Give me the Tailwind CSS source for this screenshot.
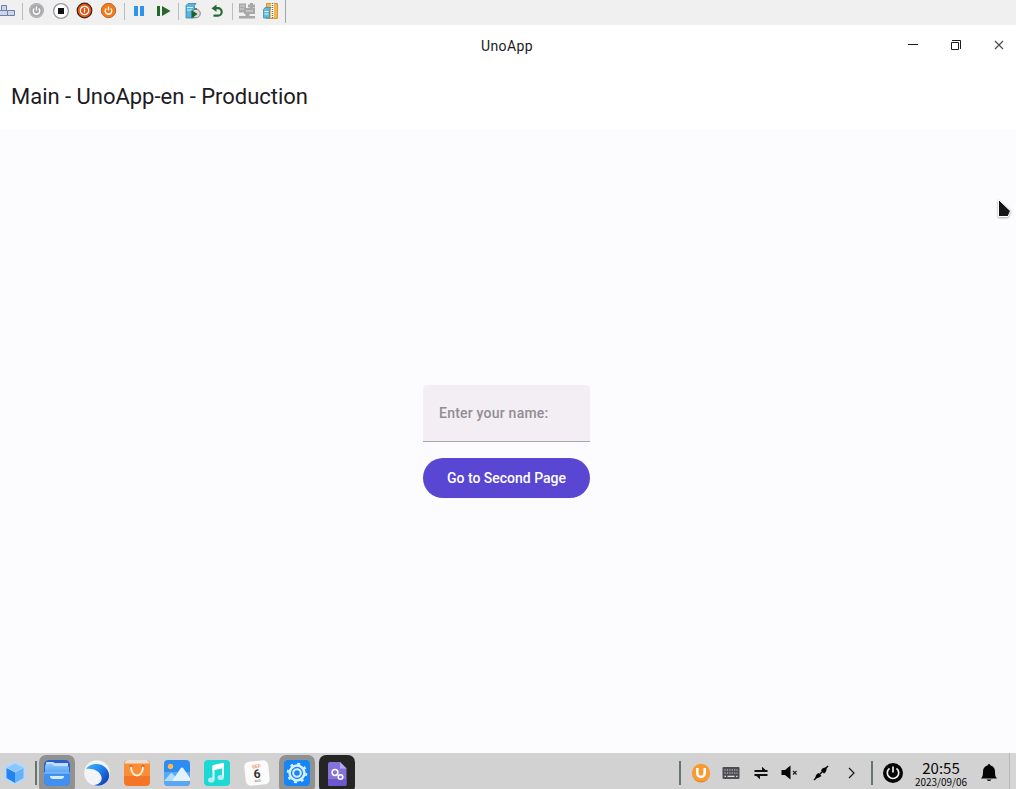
<!DOCTYPE html>
<html lang="en">
<head>
<meta charset="utf-8">
<title>UnoApp</title>
<script src="https://cdn.jsdelivr.net/npm/@tailwindcss/browser@4"></script>
</head>
<body class="w-[1016px] h-[789px] overflow-hidden relative flex flex-col bg-[#fcfcfe] font-['Roboto',sans-serif] text-[#1c1b1f]">

<!-- Virtual machine toolbar -->
<div class="h-[25px] shrink-0 flex items-start bg-[#f0f0f0]">
  <svg class="w-4 h-[22px]" viewBox="0 0 16 22"><g fill="#cbd5ee" stroke="#7180a0" stroke-width="1"><path d="M1.500 5.500h5v5h-5z"/><path d="M-1 10.500h8.500v5H-1z"/><path d="M7.500 10.500h7v5h-7z"/></g></svg>
  <div class="ml-1.5 mt-[3px] w-px h-[17px] bg-[#bcbcbc]"></div>
  <svg class="ml-px w-6 h-[22px]" viewBox="0 0 24 22"><circle cx="12.500" cy="10.500" r="7.500" fill="#aaa8ad"/><circle cx="12.500" cy="10.500" r="6.500" fill="none" stroke="#bbb"/><path d="M10.300 8.500a3.300 3.300 0 1 0 4.400 0M12.500 6.500v4" fill="none" stroke="#fff" stroke-width="1.300"/></svg>
  <svg class="w-6 h-[22px]" viewBox="0 0 24 22"><circle cx="13" cy="11" r="7.400" fill="#fff" stroke="#9997a0" stroke-width="1.300"/><path d="M10 8h6v6h-6z" fill="#111"/></svg>
  <svg class="w-6 h-[22px]" viewBox="0 0 24 22"><circle cx="12.500" cy="10.500" r="7.300" fill="#e85716" stroke="#3e2418" stroke-width="1.200"/><circle cx="12.500" cy="10.500" r="4.200" fill="none" stroke="#fff" stroke-width="1.200"/><path d="M12.500 8v4.500" stroke="#fff" stroke-width="1.200"/></svg>
  <svg class="w-6 h-[22px]" viewBox="0 0 24 22"><circle cx="12.500" cy="10.500" r="7.200" fill="#f27b17" stroke="#b76832"/><path d="M10.300 8.500a3.300 3.300 0 1 0 4.400 0M12.500 6.500v4" fill="none" stroke="#fff" stroke-width="1.300"/></svg>
  <div class="ml-1 mt-[3px] w-px h-[17px] bg-[#bcbcbc]"></div>
  <svg class="ml-0.5 w-6 h-[22px]" viewBox="0 0 24 22"><path d="M7 6h4v10H7zM13 6h4v10h-4z" fill="#2f94ec"/></svg>
  <svg class="w-6 h-[22px]" viewBox="0 0 24 22"><path d="M6 6h3v10H6zM11 6l8.500 5L11 16z" fill="#25692b"/></svg>
  <div class="ml-[3px] mt-[3px] w-px h-[17px] bg-[#bcbcbc]"></div>
  <svg class="ml-0.5 w-6 h-[22px]" viewBox="0 0 24 22"><path d="M5 5.500L7 3.500h8l-1.500 2V18H5z" fill="#58b5df" stroke="#3e839f" stroke-width=".8"/><path d="M6 7.500h6M6 10h5" stroke="#d4f2ff"/><circle cx="15" cy="13.500" r="4.300" fill="#ddd" stroke="#858585"/><path d="M13 8h3v2h-3z" fill="#777"/><path d="M10.500 10l6 4-6 4.500z" fill="#19632c"/></svg>
  <svg class="w-6 h-[22px]" viewBox="0 0 24 22"><path d="M10 8.200h3a3.700 3.700 0 0 1 0 7.400H8.500" fill="none" stroke="#286b31" stroke-width="2.200"/><path d="M6.500 8.200l5-3.800v7.600z" fill="#286b31"/></svg>
  <div class="ml-[3px] mt-[3px] w-px h-[17px] bg-[#bcbcbc]"></div>
  <svg class="ml-0.5 w-6 h-[22px]" viewBox="0 0 24 22"><g fill="#a8a8a8"><path d="M4 3.500h7v9H4zM9 8h11v6H9zM4 16h16v2.500H4zM10.500 13h4v4h-4z"/><path d="M15 3h3v6h-3z"/><path d="M13 4.500h7v3h-7z"/></g><path d="M5 6h5M5 9h4" stroke="#d5d5d5"/><path d="M11 10h7v2h-7z" fill="#c5c5c5"/></svg>
  <svg class="w-6 h-[22px]" viewBox="0 0 24 22"><path d="M7.500 3.500h11v15h-11z" fill="#f4b751" stroke="#d99635"/><path d="M13.500 3v15" stroke="#fff" stroke-width="3"/><path d="M13.500 3v15" stroke="#7c6b52" stroke-width="1.600" stroke-dasharray="1 1"/><path d="M4.500 9.500l1.500-2h6l-1.500 2V18h-6z" fill="#60b9df" stroke="#398daf" stroke-width=".8"/><path d="M5.500 11.500h4M5.500 14h4" stroke="#dff6ff"/></svg>
  <div class="ml-0.5 w-px h-[23px] bg-[#a6a6a6]"></div>
</div>

<!-- Window title bar -->
<div class="h-10 shrink-0 bg-white grid grid-cols-[1fr_auto_1fr] items-center">
  <span></span>
  <span class="text-sm leading-5 tracking-[0.400px] pt-0.5 pr-[2px]">UnoApp</span>
  <div class="flex justify-end gap-[23px] pr-[7px]">
    <svg class="w-5 h-5" viewBox="0 0 20 20" fill="none" stroke="#1b1b1b"><path d="M5 9.500h10"/></svg>
    <svg class="w-5 h-5" viewBox="0 0 20 20" fill="none" stroke="#1b1b1b"><path d="M5.500 7.500h7v7h-7zM6 5.500h8.500V14"/></svg>
    <svg class="w-5 h-5" viewBox="0 0 20 20" fill="none" stroke="#4a4d50" stroke-width="1.200"><path d="M6 6l8 8M14 6l-8 8"/></svg>
  </div>
</div>

<!-- Navigation header -->
<header class="h-16 shrink-0 bg-white flex items-center pl-[11px]">
  <h1 class="text-[22px] leading-7 tracking-[-0.020px] whitespace-nowrap">Main - UnoApp-en - Production</h1>
</header>

<main class="grow flex flex-col items-center pt-64 pr-[3px]">
  <div class="w-[167px] h-[57px] rounded-t bg-[#f3eef4] border-b border-[#a9a6aa] flex items-center px-4 text-sm font-medium tracking-[0.220px] text-[#8f8d93] whitespace-nowrap">Enter your name:</div>
  <button class="mt-4 w-[167px] h-10 rounded-full bg-[#5946d2] text-white text-sm font-medium whitespace-nowrap">Go to Second Page</button>
</main>

<!-- Desktop taskbar -->
<footer class="h-9 shrink-0 bg-[#d2d2d2] flex items-start overflow-hidden">
  <svg class="w-[30px] h-9 mr-[5px]" viewBox="0 0 30 36"><path d="M15 8l10.500 5v13L15 32 4.500 26V13z" fill="#b4d9fb"/><path d="M15 10.500l8 4-8 4.500-8-4.500z" fill="#8cc6fb"/><path d="M6.500 15l8.500 4.500V30l-8.500-5z" fill="#2383ef"/><path d="M23.500 15L15 19.500V30l8.500-5z" fill="#65b1fa"/></svg>
  <div class="w-0.5 h-6 mt-2 mr-0.5 bg-[#66756b]"></div>
  <div class="flex gap-1">
    <div class="w-9 h-[38px] mt-0.5 rounded-[7px] bg-[#919191] flex justify-center"><svg class="w-[26px] h-[34px]" viewBox="0 2 26 34"><defs><linearGradient id="folder" x2="0" y2="1"><stop stop-color="#8cc5fb"/><stop offset="1" stop-color="#4c9df3"/></linearGradient></defs><rect y="7" width="26" height="26" rx="5" fill="#2360cf"/><path d="M2 10q0-1 1-1h6l2 1h13v3H2z" fill="#c3dcfa"/><path d="M1 13q0-2 2-2h4q2 0 3 2h13q2 0 2 2v7H1z" fill="url(#folder)"/><path d="M0 20h26v8a5 5 0 0 1-5 5H5a5 5 0 0 1-5-5z" fill="#3f90f2"/><path d="M0 20h26" stroke="#8bcaff"/><path d="M6 23h14q0 3-3 3H9q-3 0-3-3z" fill="#d5edff"/></svg></div>
    <svg class="w-9 h-9" viewBox="0 0 36 36"><defs><linearGradient id="wave" x2="1" y2=".7"><stop stop-color="#43b2f0"/><stop offset=".5" stop-color="#2288f2"/><stop offset="1" stop-color="#143fb5"/></linearGradient></defs><circle cx="18" cy="20" r="12.800" fill="#f2f4f7"/><path d="M7 16C11 10 21 9.500 26.500 14.500c6 5.500 4.500 14.500-3.500 17.500-3 1.200-6 .9-8.500 0 7-.5 9.500-5 7.500-9.500C20 18 14 15 7 16z" fill="url(#wave)"/></svg>
    <svg class="w-9 h-9" viewBox="0 0 36 36"><rect x="5" y="7" width="26" height="26" rx="4" fill="#f37525"/><path d="M8.500 7h19q2 0 3.500 4H5q1.500-4 3.500-4z" fill="#e9ded7"/><path d="M5 10.500h26V23H5z" fill="#fa8e37"/><circle cx="12" cy="13.500" r="1.300" fill="#9c4819"/><circle cx="24" cy="13.500" r="1.300" fill="#9c4819"/><path d="M12 13.500c0 12 12 12 12 0" fill="none" stroke="#fff3df" stroke-width="1.800"/></svg>
    <svg class="w-9 h-9" viewBox="0 0 36 36"><rect x="5" y="7" width="26" height="26" rx="4" fill="#2b8df2"/><path d="M5 19h26v9q0 5-5 5H10q-5 0-5-5z" fill="#55aaf8"/><path d="M5 28l6-7q1.500-2 3 0l6 7z" fill="#b4dafc"/><path d="M13 28l8.500-12.500q1.500-2 3 0L31 25v3z" fill="#e4f2ff"/><path d="M5 28h26q0 5-5 5H10q-5 0-5-5z" fill="#5ba7f2"/><circle cx="11.500" cy="13.500" r="2.700" fill="#ffb64a"/></svg>
    <svg class="w-9 h-9" viewBox="0 0 36 36"><rect x="5" y="7" width="26" height="26" rx="4" fill="#1ed8d3"/><path d="M14.500 13l9.500-2v13.500M14.500 13v14" fill="none" stroke="#e5fffe" stroke-width="2"/><path d="M13.500 12.500L25 10v5l-11.500 2.500z" fill="#fff"/><ellipse cx="12.200" cy="27" rx="3.200" ry="2.600" fill="#b5ecf5"/><ellipse cx="21.700" cy="24.500" rx="3.200" ry="2.600" fill="#b5ecf5"/></svg>
    <div class="w-9 h-9 pt-2 flex justify-center"><div class="w-6 h-6 rounded-[5px] bg-[#fbfbfb] -rotate-6 flex flex-col items-center text-center"><span class="text-[5px] leading-[6px] pt-[2px] font-bold text-[#e79d79]">SEP</span><span class="text-[12px] leading-[11px] font-bold text-[#303030]">6</span><span class="text-[3px] leading-[3px] text-[#555]">WED</span></div></div>
    <div class="w-9 h-[38px] mt-0.5 rounded-[7px] bg-[#919191] flex justify-center"><svg class="w-[26px] h-[34px]" viewBox="0 2 26 34"><rect y="7" width="26" height="26" rx="4" fill="#1586f7"/><circle cx="13" cy="20" r="9.300" fill="none" stroke="#d9efff" stroke-width="2" stroke-dasharray="3 4.300"/><circle cx="13" cy="20" r="7.400" fill="none" stroke="#d9efff" stroke-width="2.500"/><circle cx="13" cy="20" r="3.800" fill="none" stroke="#d9efff" stroke-width="2"/></svg></div>
    <div class="w-9 h-[38px] mt-0.5 rounded-[7px] bg-[#252525] flex justify-center"><svg class="w-[26px] h-[34px]" viewBox="0 2 26 34"><path d="M6 9h10l6.500 6.500V31q0 2-2 2H6q-2 0-2-2V11q0-2 2-2z" fill="#8673da"/><path d="M16 9l6.500 6.500H16z" fill="#b5a9ed"/><path d="M4 26h18.500v5q0 2-2 2H6q-2 0-2-2z" fill="#6f58cc"/><g fill="none" stroke="#fff" stroke-width="1.500"><circle cx="11" cy="19.500" r="2.900"/><circle cx="16.500" cy="24" r="2.300"/></g></svg></div>
  </div>

  <!-- System tray -->
  <div class="ml-auto flex items-start">
    <div class="w-0.5 h-6 mt-2 mr-[5px] bg-[#66756b]"></div>
    <svg class="w-[30px] h-9" viewBox="0 0 30 36"><circle cx="15" cy="20" r="9.200" fill="#f79a2f"/><path d="M8 26a9.200 9.200 0 0 0 14 0 11 11 0 0 1-14 0z" fill="#e96e21"/><path d="M11.300 15v5.300a3.700 3.700 0 0 0 7.400 0V15" fill="none" stroke="#fff" stroke-width="2.600"/></svg>
    <svg class="w-[30px] h-9" viewBox="0 0 30 36"><rect x="6.500" y="14" width="17" height="12" rx="1" fill="#4d4d53"/><path d="M8.500 17h13M8.500 20h13" stroke="#ddd" stroke-width="1.200" stroke-dasharray="1.200 1.200"/><path d="M8.500 23.300h1.500m1.500 0h7m1.500 0h1.500" stroke="#ddd" stroke-width="1.200"/></svg>
    <svg class="w-[30px] h-9" viewBox="0 0 30 36"><path d="M8.500 18h13M8.500 22h13" stroke="#111" stroke-width="1.800"/><path d="M16 13.700l5.500 5h-5.500zM14 26.300l-5.500-5H14z" fill="#111"/></svg>
    <svg class="w-[30px] h-9" viewBox="0 0 30 36"><path d="M5.500 17h3.500l5.500-4.500v14L9 22H5.500z" fill="#050505"/><path d="M17 18l3.500 3.500M20.500 18L17 21.500" stroke="#222" stroke-width="1.200"/></svg>
    <svg class="w-[30px] h-9" viewBox="0 0 30 36"><path d="M8 27l14-14" stroke="#050505" stroke-width="1.500"/><path d="M9.500 25.500q-.5-4 3-5.500l3 3q-3 2-6 2.500zM20.500 14.500q-4-.5-5.500 3l3 3q3-2 2.500-6z" fill="#050505"/></svg>
    <svg class="w-[30px] h-9" viewBox="0 0 30 36"><path d="M13 15l5 5-5 5" fill="none" stroke="#181818" stroke-width="1.200"/></svg>
    <div class="w-0.5 h-6 mt-2 ml-[5px] bg-[#66756b]"></div>
    <svg class="w-10 h-9" viewBox="0 0 40 36"><circle cx="20" cy="20" r="10" fill="#050505"/><path d="M16.500 15.300a5.700 5.700 0 1 0 7 0M20 13.500v6" fill="none" stroke="#eee" stroke-width="1.700"/></svg>
    <div class="w-[56px] flex flex-col items-center font-['Noto_Sans_CJK_SC','Noto_Sans',sans-serif] text-[#080808]"><span class="text-[15px] leading-[18px] mt-1.5">20:55</span><span class="text-[10px] leading-[10px]">2023/09/06</span></div>
    <svg class="w-10 h-9" viewBox="0 0 40 36"><path d="M20 11q1.500 0 1.500 1.500 4.500 1.300 4.500 6c0 4 .5 5.500 2 7H12c1.500-1.500 2-3 2-7q0-4.700 4.500-6Q18.500 11 20 11zM17.500 26.500h5q-2.500 3-5 0z" fill="#050505"/></svg>
    <div class="h-9 w-[7px] border-l border-[#b9b9b9] bg-[#d6d6d6]"></div>
  </div>
</footer>

<!-- Mouse pointer -->
<svg class="absolute left-[994px] top-[196px] w-[22px] h-[26px] drop-shadow-[0_1px_1px_rgba(0,0,0,.35)]" viewBox="0 0 22 26"><path d="M4.500 3.500l12 11.500-2.500 5.500H4.500z" fill="#151515" stroke="#fff" stroke-width="1" stroke-linejoin="round"/></svg>
</body>
</html>
